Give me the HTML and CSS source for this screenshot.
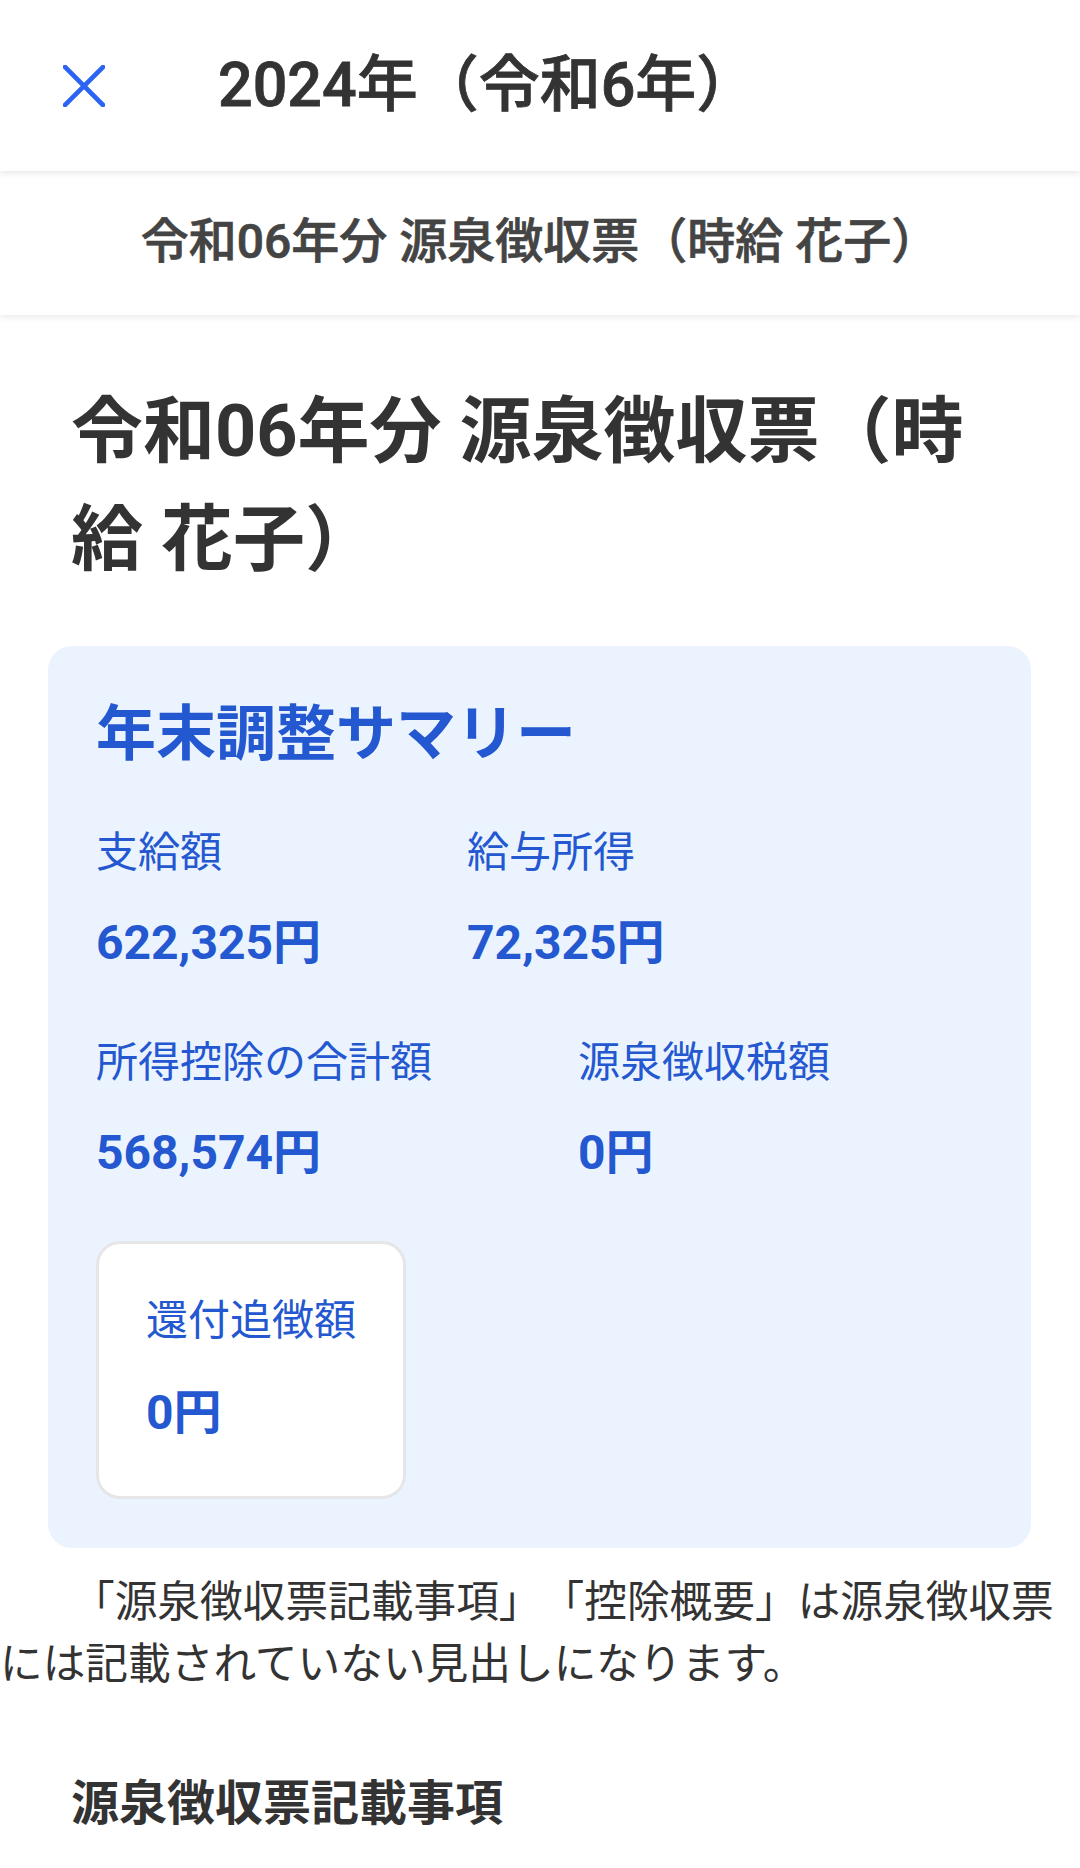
FILE: index.html
```html
<!DOCTYPE html>
<html lang="ja">
<head>
<meta charset="utf-8">
<title>2024年（令和6年）</title>
<link rel="stylesheet" href="styles.css">
</head>
<body>
<header class="appbar">
  <button class="close" aria-label="閉じる">
    <svg viewBox="0 0 42 42" width="42" height="42" aria-hidden="true">
      <path d="M2 2 L40 40 M40 2 L2 40" fill="none" stroke="#2B63F2" stroke-width="4.6" stroke-linecap="square"/>
    </svg>
  </button>
  <h1 class="appbar-title">2024年（令和6年）</h1>
</header>
<div class="subbar">令和06年分 源泉徴収票（時給 花子）</div>
<main class="content">
  <h2 class="page-title">令和06年分 源泉徴収票（時給 花子）</h2>
  <section class="summary">
    <h3 class="summary-title">年末調整サマリー</h3>
    <div class="summary-items">
      <div class="item">
        <div class="item-label">支給額</div>
        <div class="item-value">622,325円</div>
      </div>
      <div class="item">
        <div class="item-label">給与所得</div>
        <div class="item-value">72,325円</div>
      </div>
      <div class="item">
        <div class="item-label">所得控除の合計額</div>
        <div class="item-value">568,574円</div>
      </div>
      <div class="item">
        <div class="item-label">源泉徴収税額</div>
        <div class="item-value">0円</div>
      </div>
      <div class="item refund-box">
        <div class="item-label">還付追徴額</div>
        <div class="item-value refund-value">0円</div>
      </div>
    </div>
  </section>
  <p class="note">「源泉徴収票記載事項」「控除概要」は源泉徴収票には記載されていない見出しになります。</p>
  <h3 class="section-title">源泉徴収票記載事項</h3>
</main>
</body>
</html>
```

FILE: styles.css
```css
* {
  box-sizing: border-box;
}

html, body {
  margin: 0;
  padding: 0;
  background: #ffffff;
}

body {
  width: 1080px;
  min-height: 1868px;
  font-family: Roboto, "Noto Sans CJK JP", sans-serif;
  color: #333333;
  overflow: hidden;
  text-spacing-trim: space-all;
}

.appbar {
  position: relative;
  z-index: 2;
  height: 171px;
  display: flex;
  align-items: center;
  padding-left: 63px;
  background: #ffffff;
  box-shadow: 0 2px 7px rgba(0, 0, 0, 0.10);
}

.close {
  display: flex;
  width: 42px;
  height: 42px;
  padding: 0;
  margin: 0;
  border: 0;
  background: transparent;
}

.appbar-title {
  margin: 0 0 0 113px;
  font-family: Roboto, "Noto Sans CJK JP Medium", "Noto Sans CJK JP", sans-serif;
  font-size: 61px;
  font-weight: 500;
  line-height: 1;
  color: #333333;
  -webkit-text-stroke: 0.8px #333333;
}

.subbar {
  position: relative;
  z-index: 1;
  height: 144px;
  display: flex;
  align-items: center;
  justify-content: center;
  padding-bottom: 12px;
  font-family: Roboto, "Noto Sans CJK JP Medium", "Noto Sans CJK JP", sans-serif;
  font-size: 48px;
  font-weight: 500;
  color: #444444;
  background: #ffffff;
  box-shadow: 0 2px 7px rgba(0, 0, 0, 0.09);
  -webkit-text-stroke: 0.7px #444444;
}

.content {
  padding: 0;
}

.page-title {
  margin: 63px 74px 52px 71px;
  font-size: 72px;
  font-weight: 700;
  line-height: 108px;
  color: #333333;
}

.summary {
  margin: 0 49px 0 48px;
  padding: 45px 48px 49px 48px;
  background: #EBF3FE;
  border-radius: 24px;
  color: #2458D0;
}

.summary-title {
  margin: 0 0 43px 0;
  font-size: 60px;
  font-weight: 700;
  line-height: 87px;
}

.summary-items {
  display: flex;
  flex-wrap: wrap;
  column-gap: 146px;
  row-gap: 53px;
}

.item-label {
  font-size: 42px;
  font-weight: 400;
  line-height: 63px;
  white-space: nowrap;
}

.item-value {
  margin-top: 24px;
  font-size: 48px;
  font-weight: 700;
  line-height: 70px;
  white-space: nowrap;
}

.refund-box {
  width: fit-content;
  padding: 45px 47px 48px 47px;
  background: #ffffff;
  border: 3px solid #E6E6E8;
  border-radius: 24px;
}

.refund-value {
  margin-top: 26px;
}

.note {
  margin: 23px 20px 0 0;
  font-size: 42.7px;
  line-height: 62px;
  text-indent: 72px;
  color: #333333;
}

.section-title {
  margin: 74px 0 0 71px;
  font-size: 48px;
  font-weight: 700;
  line-height: 70px;
  color: #333333;
}
```
